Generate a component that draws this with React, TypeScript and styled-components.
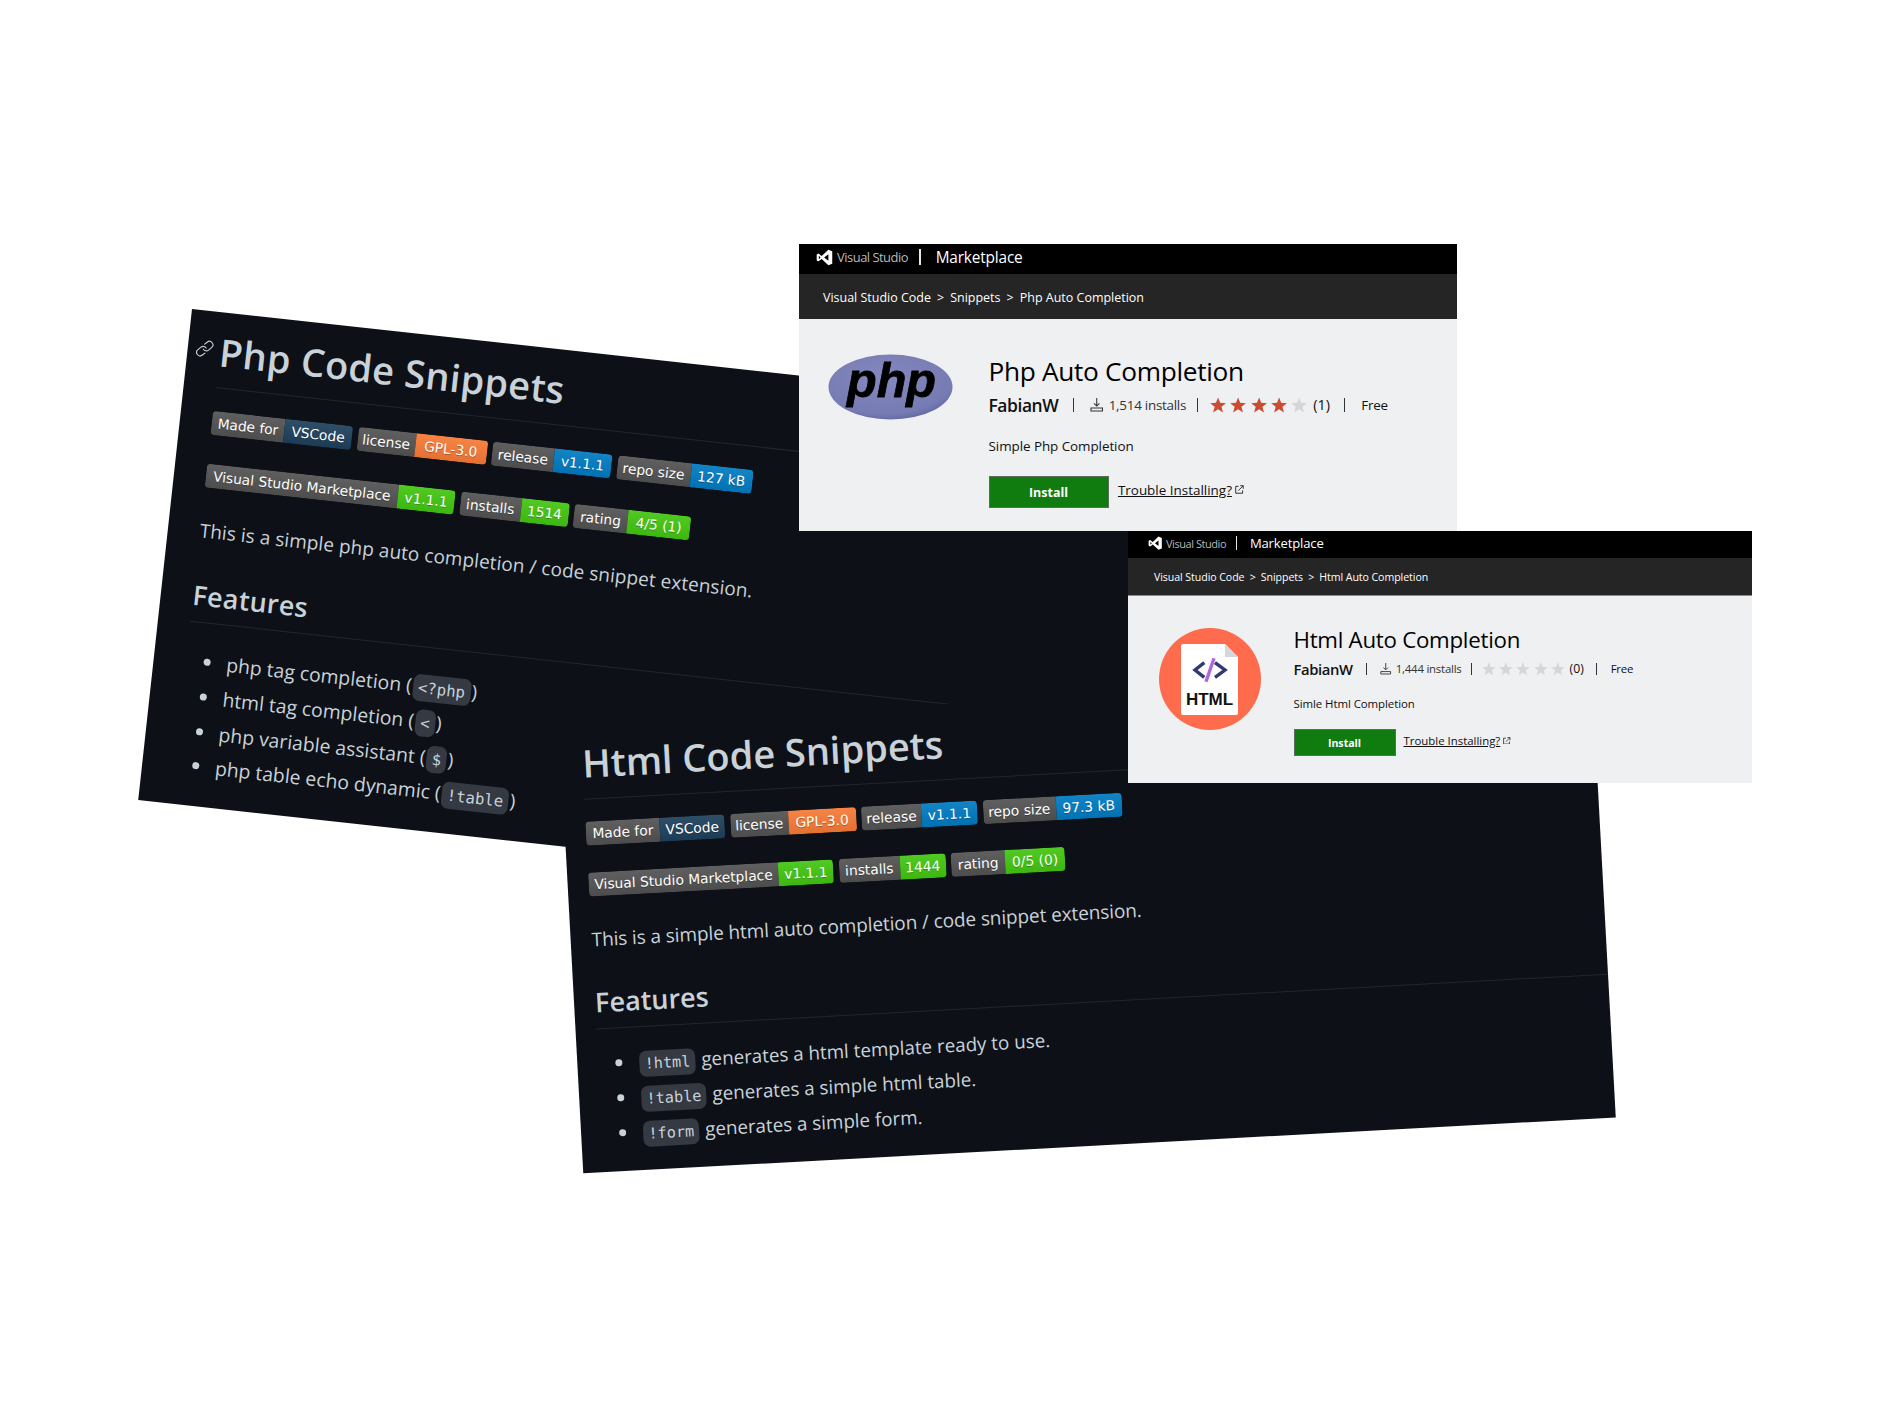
import React from "react";
import styled, { createGlobalStyle } from "styled-components";
import { GoLink } from "react-icons/go";

const Global = createGlobalStyle`
  html, body { margin: 0; padding: 0; background: #fff; }
  body { font-family: "Open Sans", "Noto Sans", sans-serif; }
`;

const Canvas = styled.main`
  position: relative;
  width: 1890px;
  height: 1417px;
  background: #fff;
  overflow: hidden;
`;

/* ---------- README windows ---------- */
const Readme = styled.section<{ $x: number; $y: number; $w: number; $h: number; $rot: number; $pad: number }>`
  position: absolute;
  left: ${(p) => p.$x}px;
  top: ${(p) => p.$y}px;
  width: ${(p) => p.$w}px;
  height: ${(p) => p.$h}px;
  padding-left: ${(p) => p.$pad}px;
  box-sizing: border-box;
  transform: rotate(${(p) => p.$rot}deg);
  transform-origin: 0 0;
  background: #0d1117;
  color: #c9d1d9;
  overflow: hidden;
`;

const Title = styled.h1<{ $track: number }>`
  position: relative;
  margin: 0;
  height: 76px;
  box-sizing: border-box;
  padding-top: 15px;
  font-size: 38px;
  line-height: 48px;
  font-weight: 600;
  letter-spacing: ${(p) => p.$track}px;
  border-bottom: 1px solid #21262d;
  white-space: nowrap;
`;

const Anchor = styled.span`
  position: absolute;
  left: -24px;
  top: 29px;
  width: 18px;
  height: 18px;
  color: #c9d1d9;
  display: flex;
  svg { width: 100%; height: 100%; }
`;

const Badges = styled.div<{ $gap: number; $top: number }>`
  display: flex;
  flex-direction: column;
  gap: ${(p) => p.$gap}px;
  margin-top: ${(p) => p.$top}px;
`;

const BadgeRow = styled.div`
  display: flex;
  gap: 5.5px;
`;

const Badge = styled.span`
  display: flex;
  height: 24px;
  border-radius: 4px;
  overflow: hidden;
  font-family: "DejaVu Sans", Verdana, sans-serif;
  font-size: 13.8px;
  color: #fff;
  text-shadow: 0 1px 0 rgba(1, 1, 1, 0.3);
`;

const Seg = styled.span<{ $w: number; $bg: string }>`
  display: flex;
  align-items: center;
  justify-content: center;
  width: ${(p) => p.$w}px;
  white-space: nowrap;
  background-color: ${(p) => p.$bg};
  background-image: linear-gradient(rgba(187, 187, 187, 0.1), rgba(0, 0, 0, 0.1));
`;

const Para = styled.p<{ $track: number }>`
  margin: 29px 0 0;
  font-size: 19px;
  line-height: 28px;
  letter-spacing: ${(p) => p.$track}px;
  white-space: nowrap;
`;

const SubTitle = styled.h2<{ $top: number; $track: number }>`
  margin: ${(p) => p.$top}px 0 0;
  height: 45px;
  box-sizing: border-box;
  font-size: 27px;
  line-height: 36px;
  font-weight: 600;
  letter-spacing: ${(p) => p.$track}px;
  border-bottom: 1px solid #21262d;
`;

const List = styled.ul<{ $top: number; $indent: number; $size: number }>`
  margin: ${(p) => p.$top}px 0 0;
  padding: 0 0 0 ${(p) => p.$indent}px;
  list-style: none;
  font-size: ${(p) => p.$size}px;
  line-height: 34.8px;
  white-space: nowrap;
`;

const Item = styled.li`
  position: relative;
  height: 34.8px;

  &::before {
    content: "";
    position: absolute;
    left: -23px;
    top: 13px;
    width: 7px;
    height: 7px;
    border-radius: 50%;
    background: #c9d1d9;
  }
`;

const Code = styled.code`
  display: inline-block;
  height: 1.72em;
  line-height: 1.72em;
  padding: 0 0.34em;
  margin: 0 1px;
  border-radius: 7px;
  background: #343942;
  font-family: "DejaVu Sans Mono", "Liberation Mono", monospace;
  font-size: 0.81em;
`;

/* ---------- Marketplace windows ---------- */
const Market = styled.section<{ $x: number; $y: number; $w: number; $h: number; $em: number }>`
  position: absolute;
  left: ${(p) => p.$x}px;
  top: ${(p) => p.$y}px;
  width: ${(p) => p.$w}px;
  height: ${(p) => p.$h}px;
  font-size: ${(p) => p.$em}px;
  display: flex;
  flex-direction: column;
  background: #eff0f2;
  color: #111;
`;

const TopBar = styled.header<{ $h: number; $pad: number }>`
  flex: none;
  height: ${(p) => p.$h}px;
  box-sizing: border-box;
  padding: 0 0 0.2em ${(p) => p.$pad}px;
  background: #000;
  color: #fff;
  display: flex;
  align-items: center;
  svg { width: 1.06em; height: 1.06em; flex: none; }
`;

const Brand = styled.span`
  margin-left: 0.32em;
  font-size: 0.81em;
  letter-spacing: -0.04em;
  color: #b8b8b8;
`;

const BrandRule = styled.span`
  width: 1.5px;
  height: 1em;
  margin: 0 0.92em 0 0.72em;
  background: #e6e6e6;
`;

const BrandName = styled.span`
  font-size: 0.96em;
  letter-spacing: -0.01em;
`;

const Crumbs = styled.nav<{ $h: number; $rule: boolean; $pad: number; $track: number }>`
  flex: none;
  height: ${(p) => p.$h}px;
  box-sizing: border-box;
  background: #252525;
  color: #fff;
  display: flex;
  align-items: center;
  gap: 0.38em;
  padding: 0.12em 0 0 ${(p) => p.$pad}px;
  letter-spacing: ${(p) => p.$track}em;
  border-bottom: ${(p) => (p.$rule ? "1px solid #8a8a8a" : "0")};
`;

const Crumb = styled.span`
  font-size: 0.78em;
`;

const Details = styled.div`
  flex: 1;
  display: flex;
  min-height: 0;
`;

const LogoSlot = styled.div<{ $w: number; $left: number; $top: number }>`
  flex: none;
  width: ${(p) => p.$w}px;
  padding: ${(p) => p.$top}px 0 0 ${(p) => p.$left}px;
  box-sizing: border-box;
  svg { display: block; }
`;

const Info = styled.div`
  display: flex;
  flex-direction: column;
  padding-top: 2.07em;
`;

const Name = styled.h2`
  margin: 0;
  font-size: 1.64em;
  line-height: 1.46em;
  font-weight: 400;
  letter-spacing: -0.012em;
  white-space: nowrap;
  color: #000;
`;

const Meta = styled.div`
  display: flex;
  align-items: center;
  height: 1.6em;
  margin-top: 0.1em;
  white-space: nowrap;
`;

const Author = styled.span`
  font-size: 1.09em;
  font-weight: 600;
  letter-spacing: -0.025em;
`;

const MetaRule = styled.span<{ $l: number; $r: number }>`
  width: 1px;
  height: 0.85em;
  margin: 0 ${(p) => p.$r}em 0 ${(p) => p.$l}em;
  background: #333;
`;

const Installs = styled.span`
  display: flex;
  align-items: center;
  gap: 0.36em;
  font-size: 0.84em;
  letter-spacing: -0.02em;
  color: #333;
  svg { width: 1em; height: 1em; }
`;

const Stars = styled.span`
  display: flex;
  gap: 0.25em;
  svg { width: 1.01em; height: 1.01em; display: block; }
`;

const Count = styled.span`
  margin-left: 0.42em;
  font-size: 0.9em;
`;

const Price = styled.span`
  font-size: 0.84em;
  letter-spacing: -0.02em;
`;

const Summary = styled.p<{ $gap: number }>`
  margin: ${(p) => p.$gap}em 0 0;
  font-size: 0.84em;
  line-height: 1.4em;
  letter-spacing: -0.005em;
  white-space: nowrap;
`;

const Actions = styled.div`
  display: flex;
  align-items: center;
  margin-top: 1.28em;
  white-space: nowrap;
`;

const Install = styled.span`
  display: flex;
  align-items: center;
  justify-content: center;
  width: 7.5em;
  height: 2em;
  box-sizing: border-box;
  background: #107c10;
  border: 1px solid #5c6b5c;
  color: #fff;
  font-weight: 700;
  span { font-size: 0.78em; }
`;

const Trouble = styled.a`
  margin: 0 0 0.35em 0.7em;
  font-size: 0.84em;
  color: #111;
  text-decoration: underline;
`;

const External = styled.span`
  display: flex;
  margin: 0 0 0.35em 0.2em;
  svg { width: 0.56em; height: 0.56em; }
`;

/* ---------- drawings ---------- */
const VsMark = () => (
  <svg viewBox="0 0 24 24" aria-hidden="true">
    <path
      fill="#fff"
      fillRule="evenodd"
      d="M17.5 1 8 10 3.5 6.5 1 7.8v8.4l2.5 1.3L8 14l9.5 9 5.5-2.2V3.2ZM4 9.6 6.4 12 4 14.4ZM17.5 7.5v9l-6-4.5Z"
    />
  </svg>
);

const Tray = () => (
  <svg viewBox="0 0 14 14" fill="none" stroke="#333" strokeWidth="1.1" aria-hidden="true">
    <path d="M7 0v8.2M4.2 5.6 7 8.4l2.8-2.8" />
    <path d="M1 10.5h12v3H1z" />
  </svg>
);

const Star = ({ on }: { on: boolean }) => (
  <svg viewBox="0 0 20 20" aria-hidden="true">
    <polygon
      fill={on ? "#c94c33" : "#d6d6d6"}
      points="10,0.5 12.6,7.2 19.8,7.6 14.2,12.2 16.1,19.3 10,15.3 3.9,19.3 5.8,12.2 0.2,7.6 7.4,7.2"
    />
  </svg>
);

const ExternalIcon = () => (
  <svg viewBox="0 0 10 10" fill="none" stroke="#222" strokeWidth="1" aria-hidden="true">
    <path d="M4 1.5H.8v7.7h7.7V6" />
    <path d="M3.8 6.2 9 1M5.8.8h3.4v3.4" />
  </svg>
);

const PhpLogo = () => (
  <svg width="125" height="66" viewBox="0 0 125 66" aria-label="php logo">
    <defs>
      <radialGradient id="phpBody" cx="0.45" cy="0.35" r="0.75">
        <stop offset="0" stopColor="#8388bd" />
        <stop offset="0.75" stopColor="#777bb3" />
        <stop offset="1" stopColor="#4f5b93" />
      </radialGradient>
    </defs>
    <ellipse cx="62.5" cy="33" rx="62" ry="32.5" fill="url(#phpBody)" />
    <text
      x="19"
      y="43"
      fontFamily="'Liberation Sans', sans-serif"
      fontStyle="italic"
      fontWeight="700"
      fontSize="48"
      textLength="89"
      lengthAdjust="spacingAndGlyphs"
      fill="#000"
      stroke="#000"
      strokeWidth="0.8"
    >
      php
    </text>
  </svg>
);

const HtmlLogo = () => (
  <svg width="102" height="102" viewBox="0 0 102 102" aria-label="html logo">
    <circle cx="51" cy="51" r="51" fill="#fe6b4d" />
    <path d="M24 16h42l13 13v56a2 2 0 0 1-2 2H24a2 2 0 0 1-2-2V18a2 2 0 0 1 2-2Z" fill="#fff" />
    <path d="M66 16l13 13H66Z" fill="#d4d7de" />
    <path d="M45.3 34.7 36 42l9.3 7.3M56 34.7 66 42l-10 7.3" fill="none" stroke="#2f3a73" strokeWidth="3.4" />
    <path d="M55 30.3 47 53.7" fill="none" stroke="#b266d8" strokeWidth="3.4" />
    <text
      x="50.5"
      y="77"
      textAnchor="middle"
      fontFamily="'Liberation Sans', sans-serif"
      fontWeight="700"
      fontSize="17"
      fill="#111"
    >
      HTML
    </text>
  </svg>
);

/* ---------- data ---------- */
const GREY = "#555";
const NAVY = "#1f425f";
const ORANGE = "#fe7d37";
const BLUE = "#007ec6";
const GREEN = "#44cc11";

type B = [string, number, string, number, string];

const phpRows: B[][] = [
  [
    ["Made for", 73, "VSCode", 68, NAVY],
    ["license", 58, "GPL-3.0", 72, ORANGE],
    ["release", 62, "v1.1.1", 58, BLUE],
    ["repo size", 74, "127 kB", 62, BLUE],
  ],
  [
    ["Visual Studio Marketplace", 193, "v1.1.1", 57, GREEN],
    ["installs", 61, "1514", 48, GREEN],
    ["rating", 54, "4/5 (1)", 63, GREEN],
  ],
];

const htmlRows: B[][] = [
  [
    ["Made for", 74, "VSCode", 65, NAVY],
    ["license", 58, "GPL-3.0", 68, ORANGE],
    ["release", 60, "v1.1.1", 56, BLUE],
    ["repo size", 73, "97.3 kB", 66, BLUE],
  ],
  [
    ["Visual Studio Marketplace", 190, "v1.1.1", 55, GREEN],
    ["installs", 61, "1444", 46, GREEN],
    ["rating", 54, "0/5 (0)", 60, GREEN],
  ],
];

const BadgeBlock = ({ rows, gap, top }: { rows: B[][]; gap: number; top: number }) => (
  <Badges $gap={gap} $top={top}>
    {rows.map((row, i) => (
      <BadgeRow key={i}>
        {row.map(([l, lw, r, rw, c]) => (
          <Badge key={l}>
            <Seg $w={lw} $bg={GREY}>{l}</Seg>
            <Seg $w={rw} $bg={c}>{r}</Seg>
          </Badge>
        ))}
      </BadgeRow>
    ))}
  </Badges>
);

const MarketCard = (p: {
  x: number; y: number; w: number; h: number; em: number;
  barH: number; crumbH: number; rule: boolean; barPad: number; crumbPad: number; crumbTrack: number;
  slot: number; left: number; top: number; logo: React.ReactNode; sumGap: number;
  name: string; installs: string; rating: number; count: number; summary: string;
}) => (
  <Market $x={p.x} $y={p.y} $w={p.w} $h={p.h} $em={p.em}>
    <TopBar $h={p.barH} $pad={p.barPad}>
      <VsMark />
      <Brand>Visual Studio</Brand>
      <BrandRule />
      <BrandName>Marketplace</BrandName>
    </TopBar>
    <Crumbs $h={p.crumbH} $rule={p.rule} $pad={p.crumbPad} $track={p.crumbTrack}>
      <Crumb>Visual Studio Code</Crumb>
      <Crumb>&gt;</Crumb>
      <Crumb>Snippets</Crumb>
      <Crumb>&gt;</Crumb>
      <Crumb>{p.name}</Crumb>
    </Crumbs>
    <Details>
      <LogoSlot $w={p.slot} $left={p.left} $top={p.top}>{p.logo}</LogoSlot>
      <Info>
        <Name>{p.name}</Name>
        <Meta>
          <Author>FabianW</Author>
          <MetaRule $l={0.95} $r={1} />
          <Installs><Tray />{p.installs} installs</Installs>
          <MetaRule $l={0.7} $r={0.75} />
          <Stars>
            {[0, 1, 2, 3, 4].map((i) => <Star key={i} on={i < p.rating} />)}
          </Stars>
          <Count>({p.count})</Count>
          <MetaRule $l={0.9} $r={1} />
          <Price>Free</Price>
        </Meta>
        <Summary $gap={p.sumGap}>{p.summary}</Summary>
        <Actions>
          <Install><span>Install</span></Install>
          <Trouble>Trouble Installing?</Trouble>
          <External><ExternalIcon /></External>
        </Actions>
      </Info>
    </Details>
  </Market>
);

export default function App() {
  return (
    <Canvas>
      <Global />

      <Readme $x={192} $y={309} $w={1000} $h={494} $rot={6.25} $pad={32}>
        <Title $track={0.3}>
          <Anchor><GoLink /></Anchor>
          Php Code Snippets
        </Title>
        <BadgeBlock rows={phpRows} gap={29} top={23} />
        <Para $track={0.08}>This is a simple php auto completion / code snippet extension.</Para>
        <SubTitle $top={33} $track={0.25}>Features</SubTitle>
        <List $top={22} $indent={41} $size={19.4}>
          <Item>php tag completion (<Code>&lt;?php</Code>)</Item>
          <Item>html tag completion (<Code>&lt;</Code>)</Item>
          <Item>php variable assistant (<Code>$</Code>)</Item>
          <Item>php table echo dynamic (<Code>!table</Code>)</Item>
        </List>
      </Readme>

      <Readme $x={559} $y={725} $w={1034} $h={449} $rot={-3.1} $pad={21}>
        <Title $track={0}>Html Code Snippets</Title>
        <BadgeBlock rows={htmlRows} gap={27} top={22} />
        <Para $track={-0.1}>This is a simple html auto completion / code snippet extension.</Para>
        <SubTitle $top={31} $track={0}>Features</SubTitle>
        <List $top={18} $indent={40} $size={18.8}>
          <Item><Code>!html</Code> generates a html template ready to use.</Item>
          <Item><Code>!table</Code> generates a simple html table.</Item>
          <Item><Code>!form</Code> generates a simple form.</Item>
        </List>
      </Readme>

      <MarketCard
        x={799} y={244} w={658} h={287} em={16} barH={30} crumbH={45} rule={false} barPad={17} crumbPad={24} crumbTrack={0}
        slot={189.5} left={29} top={35} logo={<PhpLogo />} sumGap={1.43}
        name="Php Auto Completion" installs="1,514" rating={4} count={1} summary="Simple Php Completion"
      />
      <MarketCard
        x={1128} y={531} w={624} h={252} em={13.6} barH={27} crumbH={38} rule barPad={20} crumbPad={26} crumbTrack={-0.005}
        slot={165.5} left={31} top={32} logo={<HtmlLogo />} sumGap={1.4}
        name="Html Auto Completion" installs="1,444" rating={0} count={0} summary="Simle Html Completion"
      />
    </Canvas>
  );
}
